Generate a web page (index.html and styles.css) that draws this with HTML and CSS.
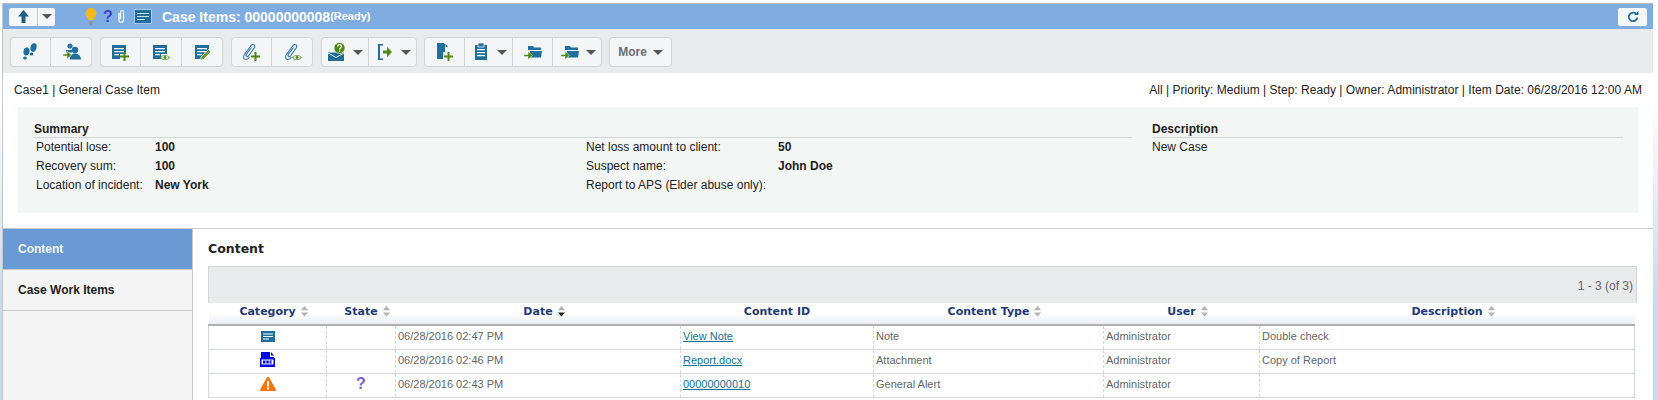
FILE: index.html
```html
<!DOCTYPE html>
<html lang="en-US">
<head>
<title>Case Items</title>
<link rel="stylesheet" href="styles.css">
</head>
<body>
<svg class="defs">
  <symbol id="plus" viewBox="0 0 20 20"><path d="M13.5 10h2v3.5H19v2h-3.500V19h-2v-3.500H10v-2h3.500z" fill="#4f8a10"/></symbol>
  <symbol id="eye" viewBox="0 0 20 20"><path d="M9 15.5c2-3.400 8-3.400 10 0-2 3.400-8 3.400-10 0z" fill="#6f9a3a"/><ellipse cx="14" cy="15.5" rx="3.4" ry="1.8" fill="#f3f5f7"/><circle cx="14" cy="15.5" r="1.4" fill="#4f8a10"/></symbol>
  <symbol id="lines" viewBox="0 0 20 20"><path d="M2 3h14v9h-6v5H2z" fill="#1f6e9c"/><path d="M4 6h10v1.200H4zM4 9h10v1.200H4zM4 12h5v1.200H4z" fill="#fff"/></symbol>
  <symbol id="clip" viewBox="0 0 20 20"><path d="M3.5 12.500 10 3.500c1.500-2 4.800-.5 3.500 2L7.500 14c-1 1.500-3.200 0-2.300-1.500L10.500 5.500M3.500 12.500C1.500 15 2.500 17.500 5 17.500c1.500 0 2.500-1 3.500-2.500" fill="none" stroke="#2c76a8" stroke-width="1.1"/></symbol>
  <symbol id="folder" viewBox="0 0 20 20"><path d="M5 4h5l1 1.500h7V8H5z" fill="#1f6e9c"/><path d="M7 9h12l-1 6.500H7z" fill="#1f6e9c"/><path d="M1 12.500h4V9.500l4.500 4-4.500 4v-3H1z" fill="#4f8a10" stroke="#f3f5f7" stroke-width=".5"/></symbol>
  <symbol id="sort" viewBox="0 0 10 12"><path d="M5 0 9 4.500H1zM1 7h8L5 11.500z" fill="#b4b4b4"/></symbol>
</svg>

<div class="frame">
  <div class="titlebar">
    <div class="upbtn">
      <span class="upmain">
        <svg width="11" height="13" viewBox="0 0 11 13"><path d="M5.500 0 11 6.500H7.500V13H3.500V6.500H0z" fill="#1f5f85"/></svg>
      </span>
      <span class="updrop"><i class="caret"></i></span>
    </div>
    <div class="status">
      <svg width="12" height="17" viewBox="0 0 12 17"><path d="M6 0a5.500 5.500 0 0 1 3.500 9.700L8.500 12h-5L2.500 9.700A5.500 5.500 0 0 1 6 0z" fill="#f6b820"/><path d="M4 13h4v3l-1 1H5l-1-1z" fill="#8f96a0"/></svg>
      <span class="qmark">?</span>
      <svg class="clip" width="10" height="15" viewBox="0 0 10 15"><path d="M3 4v7c0 3 4.500 3 4.500 0V3c0-2-3-2-3 0v7" fill="none" stroke="#fff" stroke-width="1.2"/></svg>
      <svg class="note" width="16" height="13" viewBox="0 0 16 13"><path d="M0 0h16v13H0z" fill="#1f6e9c"/><path d="M2 3h12v1H2zM2 6h12v1H2zM2 9h8v1H2z" fill="#cfe3f2"/></svg>
    </div>
    <div class="title">Case Items: 00000000008<span class="ready">(Ready)</span></div>
    <div class="refresh">
      <svg width="12" height="12" viewBox="0 0 12 12"><path d="M9.500 3.300A4.300 4.300 0 1 0 10.300 6.500" fill="none" stroke="#1f6e9c" stroke-width="1.8"/><path d="M7 4h4.500V0z" fill="#1f6e9c"/></svg>
    </div>
  </div>

  <div class="toolbar">
    <div class="group wide-gap">
      <span class="btn w41"><svg class="ic" viewBox="0 0 20 20"><ellipse cx="13.5" cy="5.5" rx="3" ry="4.3" transform="rotate(15 13.5 5.5)" fill="#1f6e9c"/><ellipse cx="11.5" cy="12" rx="1.9" ry="1.5" fill="#1f6e9c"/><ellipse cx="6.5" cy="9.5" rx="3" ry="4" transform="rotate(10 6.5 9.5)" fill="#1f6e9c"/><ellipse cx="5" cy="16" rx="1.9" ry="1.6" fill="#1f6e9c"/></svg></span>
      <span class="btn w41"><svg class="ic" viewBox="0 0 20 20"><circle cx="8" cy="4" r="2.6" fill="#2c76a8"/><circle cx="13" cy="8" r="3.2" fill="#1f6e9c"/><path d="M8 16c0-3 2.500-4.500 5-4.500s6 2 6 6H8z" fill="#1f6e9c"/><path d="M4 8h6v2.500H4z" fill="#1f6e9c"/><path d="M1 12h4V9l4.500 4-4.500 4v-3H1z" fill="#4f8a10" stroke="#f3f5f7" stroke-width=".5"/></svg></span>
    </div>
    <div class="group wide-gap">
      <span class="btn w41"><svg class="ic"><use href="#lines"/><use href="#plus"/></svg></span>
      <span class="btn w41"><svg class="ic"><use href="#lines"/><use href="#eye"/></svg></span>
      <span class="btn w41"><svg class="ic" viewBox="0 0 20 20"><use href="#lines" width="20" height="20"/><path d="M8 15 15.500 7.500l2.500 2.500L10.500 17.500 7.500 18z" fill="#6f9a3a" stroke="#f3f5f7" stroke-width=".7"/></svg></span>
    </div>
    <div class="group wide-gap">
      <span class="btn w41"><svg class="ic"><use href="#clip"/><use href="#plus"/></svg></span>
      <span class="btn w41"><svg class="ic"><use href="#clip"/><use href="#eye"/></svg></span>
    </div>
    <div class="group">
      <span class="btn w48"><svg class="ic" viewBox="0 0 20 20"><path d="M1 10.500h16V19H1z" fill="#1f6e9c"/><path d="M1 11l8 4.500 8-4.500" fill="none" stroke="#f3f5f7" stroke-width="1"/><circle cx="12.500" cy="6" r="5.500" fill="#4f8a10" stroke="#f3f5f7" stroke-width=".6"/><path d="M10.500 4.500c.2-2.500 4-2.500 4 0 0 1.500-2 1.500-2 3" fill="none" stroke="#fff" stroke-width="1.2"/><path d="M12 8.500h1.200v1.200H12z" fill="#fff"/></svg><i class="caret"></i></span>
      <span class="btn w48"><svg class="ic" viewBox="0 0 20 20"><path d="M3 2h5v1.600H5v13h3V18H3z" fill="#1f6e9c"/><path d="M8 8.500h4V5l5 5-5 5v-3.500H8z" fill="#4f8a10"/></svg><i class="caret"></i></span>
    </div>
    <div class="group">
      <span class="btn w41"><svg class="ic" viewBox="0 0 20 20"><path d="M3 1h7l1 1.500V10H9v7H3z" fill="#1f6e9c"/><path d="M11.500 1.500 14 5h-2.500z" fill="#1f6e9c"/><use href="#plus" width="20" height="20"/></svg></span>
      <span class="btn w48"><svg class="ic" viewBox="0 0 20 20"><path d="M4 3h12v15H4z" fill="#1f6e9c"/><path d="M7 1h6v4H7z" fill="#1f6e9c" stroke="#f3f5f7" stroke-width=".8"/><path d="M6 7h8v1.200H6zM6 10h8v1.200H6zM6 13h8v1.200H6z" fill="#fff"/></svg><i class="caret"></i></span>
      <span class="btn w40"><svg class="ic"><use href="#folder"/></svg></span>
      <span class="btn w49"><svg class="ic"><use href="#folder"/></svg><i class="caret"></i></span>
    </div>
    <div class="group">
      <span class="btn w63 more">More<i class="caret"></i></span>
    </div>
  </div>

  <div class="infoline">
    <span>Case1 | General Case Item</span>
    <span>All | Priority: Medium | Step: Ready | Owner: Administrator | Item Date: 06/28/2016 12:00 AM</span>
  </div>

  <div class="summary">
    <div class="sum-main">
      <h4 class="sum-head">Summary</h4>
      <div class="sum-cols">
        <div class="sum-col col1">
          <div class="sum-row"><span>Potential lose:</span><b>100</b></div>
          <div class="sum-row"><span>Recovery sum:</span><b>100</b></div>
          <div class="sum-row"><span>Location of incident:</span><b>New York</b></div>
        </div>
        <div class="sum-col col2">
          <div class="sum-row"><span>Net loss amount to client:</span><b>50</b></div>
          <div class="sum-row"><span>Suspect name:</span><b>John Doe</b></div>
          <div class="sum-row"><span>Report to APS (Elder abuse only):</span><b></b></div>
        </div>
      </div>
    </div>
    <div class="sum-desc">
      <h4 class="sum-head">Description</h4>
      <div class="sum-row">New Case</div>
    </div>
  </div>

  <div class="main">
    <div class="sidebar">
      <div class="tab active">Content</div>
      <div class="tab">Case Work Items</div>
    </div>
    <div class="content">
      <h3 class="heading">Content</h3>
      <div class="grid">
        <div class="pager">1 - 3 (of 3)</div>
        <table>
          <colgroup>
            <col class="c1"><col class="c2"><col class="c3"><col class="c4"><col class="c5"><col class="c6"><col>
          </colgroup>
          <thead>
            <tr>
              <th>Category<svg class="sort"><use href="#sort"/></svg></th>
              <th>State<svg class="sort"><use href="#sort"/></svg></th>
              <th>Date<svg class="sort" viewBox="0 0 10 12"><path d="M5 0 9 4.500H1z" fill="#b4b4b4"/><path d="M1 7h8L5 11.500z" fill="#222"/></svg></th>
              <th>Content ID</th>
              <th>Content Type<svg class="sort"><use href="#sort"/></svg></th>
              <th>User<svg class="sort"><use href="#sort"/></svg></th>
              <th>Description<svg class="sort"><use href="#sort"/></svg></th>
            </tr>
          </thead>
          <tbody>
            <tr>
              <td class="mid"><svg class="cat" width="14" height="11" viewBox="0 0 14 11"><path d="M0 0h14v11H0z" fill="#1f6e9c"/><path d="M2 2.500h10v1H2zM2 5h10v1H2zM2 7.500h6v1H2z" fill="#fff"/></svg></td>
              <td></td>
              <td>06/28/2016 02:47 PM</td>
              <td><a href="#">View Note</a></td>
              <td>Note</td>
              <td>Administrator</td>
              <td>Double check</td>
            </tr>
            <tr>
              <td class="mid"><svg class="cat" width="15" height="16" viewBox="0 0 15 16"><path d="M1 0h9v5h4v9.500H1z" fill="#0000e6"/><path d="M11 0l3 3.500h-3z" fill="#0000e6"/><path d="M0 6h15v9H0z" fill="#0000e6"/><path d="M1.500 7.500h12v5h-12z" fill="#fff"/><path d="M3 8.500h2.500v3H3zM6.300 8.500h2.400v3H6.300zM9.500 8.500h2.500v1h-1.500v1H12v1H9.500z" fill="#0000e6"/></svg></td>
              <td></td>
              <td>06/28/2016 02:46 PM</td>
              <td><a href="#">Report.docx</a></td>
              <td>Attachment</td>
              <td>Administrator</td>
              <td>Copy of Report</td>
            </tr>
            <tr>
              <td class="mid"><svg class="cat" width="16" height="14" viewBox="0 0 16 14"><path d="M8 0c.6 0 1 .3 1.300.8l6.400 11.400c.5.900 0 1.800-1 1.800H1.300c-1 0-1.500-.9-1-1.800L6.700.8C7 .3 7.400 0 8 0z" fill="#ff7300"/><path d="M7 4h2v5.500H7zM7 10.500h2V12.500H7z" fill="#fff"/></svg></td>
              <td class="mid"><span class="state">?</span></td>
              <td>06/28/2016 02:43 PM</td>
              <td><a href="#">00000000010</a></td>
              <td>General Alert</td>
              <td>Administrator</td>
              <td></td>
            </tr>
          </tbody>
        </table>
      </div>
    </div>
  </div>
</div>
</body>
</html>
```

FILE: styles.css
```css
html, body {
	margin: 0;
	height: 400px;
	overflow: hidden;
	font-family: "Liberation Sans", Arial, sans-serif;
	}
body {
	box-sizing: border-box;
	padding-top: 3px;
	background: linear-gradient(#fff 100px, #c8daec 300px);
	}
.defs {
	display: none;
	}
.frame {
	margin-left: 2px;
	width: 1650px;
	height: 397px;
	border-left: 1px solid #c3c7cc;
	border-top: 1px solid #b9bdc2;
	background-color: #fff;
	}

/* title bar */
.titlebar {
	display: flex;
	align-items: center;
	height: 25px;
	background-color: #7fade2;
	}
.upbtn {
	display: flex;
	width: 46px;
	height: 18px;
	margin-left: 6px;
	background-color: #f5f6f8;
	border-radius: 2px;
	}
.upmain {
	display: flex;
	width: 28px;
	align-items: center;
	justify-content: center;
	border-right: 1px solid #c8c8c8;
	}
.updrop {
	display: flex;
	flex: 1;
	align-items: center;
	justify-content: center;
	}
.status {
	display: flex;
	align-items: center;
	margin-left: 30px;
	height: 25px;
	}
.qmark {
	width: 12px;
	margin-left: 5px;
	color: #3f3fd0;
	font-size: 16px;
	font-weight: bold;
	text-align: center;
	}
.status .clip {
	margin-left: 2px;
	}
.status .note {
	margin-left: 9px;
	outline: 1px solid #a6c8ea;
	}
.title {
	flex: 1;
	margin-left: 11px;
	color: #fff;
	font-size: 14px;
	font-weight: bold;
	}
.ready {
	font-size: 11px;
	vertical-align: 2px;
	}
.refresh {
	display: flex;
	align-items: center;
	justify-content: center;
	width: 29px;
	height: 18px;
	margin-right: 6px;
	background-color: #f5f6f8;
	border-radius: 2px;
	}
.caret {
	display: inline-block;
	width: 0;
	height: 0;
	border-left: 5px solid transparent;
	border-right: 5px solid transparent;
	border-top: 5px solid #555;
	}

/* toolbar */
.toolbar {
	display: flex;
	gap: 7px;
	height: 44px;
	box-sizing: border-box;
	padding: 8px 0 0 7px;
	background-color: #e9eaec;
	}
.group {
	display: flex;
	height: 30px;
	box-sizing: border-box;
	background-color: #f3f5f7;
	border: 1px solid #d3d4d6;
	border-radius: 4px;
	}
.wide-gap {
	margin-right: 1px;
	}
.btn {
	display: flex;
	align-items: center;
	justify-content: center;
	gap: 6px;
	box-sizing: border-box;
	border-right: 1px solid #d3d4d6;
	}
.btn:first-child {
	margin-left: -1px;
	}
.btn:last-child {
	margin-right: -1px;
	border-right: 0;
	}
.w40 { width: 40px; }
.w41 { width: 41px; }
.w48 { width: 48px; }
.w49 { width: 49px; }
.w63 { width: 63px; }
.ic {
	width: 20px;
	height: 20px;
	}
.more {
	color: #6b6f76;
	font-size: 12px;
	font-weight: bold;
	}

/* info line and summary */
.infoline {
	display: flex;
	justify-content: space-between;
	height: 34px;
	padding: 0 11px;
	color: #222;
	font-size: 12px;
	letter-spacing: .03px;
	line-height: 35px;
	}
.summary {
	display: flex;
	width: 1620px;
	height: 106px;
	box-sizing: border-box;
	margin-left: 15px;
	padding-top: 15px;
	background-color: #f4f6f6;
	color: #222;
	font-size: 12px;
	}
.sum-main {
	width: 1099px;
	margin-left: 15px;
	}
.sum-desc {
	width: 471px;
	margin-left: 20px;
	}
.sum-head {
	margin: 0;
	height: 15px;
	padding-left: 1px;
	border-bottom: 1px solid #d3d5d6;
	font-size: 12px;
	line-height: 15px;
	}
.sum-desc .sum-head {
	padding-left: 0;
	}
.sum-cols {
	display: flex;
	padding-left: 3px;
	}
.col1 {
	width: 550px;
	}
.col1 .sum-row span {
	width: 119px;
	}
.col2 .sum-row span {
	width: 192px;
	}
.sum-row {
	display: flex;
	height: 19px;
	line-height: 19px;
	}

/* main area */
.main {
	display: flex;
	height: 171px;
	margin-top: 15px;
	border-top: 1px solid #c8cacc;
	}
.sidebar {
	width: 189px;
	background-color: #f4f4f4;
	border-right: 1px solid #c8cacc;
	}
.tab {
	height: 40px;
	padding-left: 15px;
	border-bottom: 1px solid #c8cacc;
	color: #222;
	font-size: 12px;
	font-weight: bold;
	line-height: 41px;
	}
.tab.active {
	background-color: #6a9ad4;
	color: #f2f6fb;
	}
.content {
	flex: 1;
	padding-left: 15px;
	}
.heading {
	margin: 0;
	height: 37px;
	color: #222;
	font-family: "DejaVu Sans", Verdana, sans-serif;
	font-size: 12.5px;
	font-weight: bold;
	line-height: 40px;
	}
.grid {
	width: 1429px;
	}
.pager {
	height: 37px;
	box-sizing: border-box;
	padding-right: 3px;
	background-color: #e9eaec;
	border: 1px solid #d3d5da;
	border-bottom: 0;
	color: #666;
	font-size: 12px;
	line-height: 38px;
	text-align: right;
	}
table {
	width: 1427px;
	border-collapse: collapse;
	table-layout: fixed;
	}
.c1 { width: 118px; }
.c2 { width: 69px; }
.c3 { width: 285px; }
.c4 { width: 193px; }
.c5 { width: 230px; }
.c6 { width: 156px; }
th {
	height: 16px;
	padding: 0 0 5px;
	background: linear-gradient(#fff 45%, #eceef5);
	border-bottom: 2px solid #b0b0b0;
	color: #1f3a78;
	font-family: "DejaVu Sans", Verdana, sans-serif;
	font-size: 11px;
	font-weight: bold;
	text-align: center;
	}
.sort {
	width: 9px;
	height: 11px;
	margin: 0 -13px 0 4px;
	vertical-align: -2px;
	}
td {
	height: 20px;
	padding: 0 0 3px 2px;
	border: 1px solid #d3d5de;
	border-left: 1px dashed #d3dae3;
	border-right: 1px dashed #d3dae3;
	color: #666;
	font-size: 11px;
	}
td:first-child {
	border-left: 1px solid #d3d5de;
	}
td:last-child {
	border-right: 1px solid #d3d5de;
	}
td.mid {
	padding: 0 0 3px;
	text-align: center;
	}
.cat {
	vertical-align: middle;
	}
.state {
	color: #7a5fd0;
	font-size: 16px;
	font-weight: bold;
	}
a {
	color: #0f7396;
	}
```
